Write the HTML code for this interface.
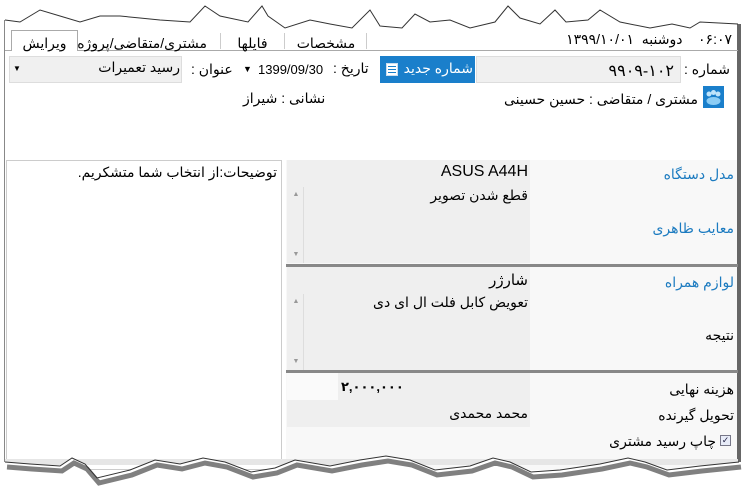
<!DOCTYPE html>
<html><head><meta charset="utf-8"><style>
*{margin:0;padding:0;box-sizing:border-box}
body{width:750px;height:501px;background:#fff;position:relative;overflow:hidden;font-family:"Liberation Sans","DejaVu Sans",sans-serif;font-size:14px;color:#000}
.a{position:absolute;white-space:nowrap}
.r{direction:rtl}
.lbl{color:#1c7bc0}
</style></head><body>
<!-- frame -->
<div class="a" style="left:4px;top:20px;width:737px;height:450px;background:#fff;border-left:1px solid #888;border-right:4px solid #666"></div>
<!-- torn top -->
<svg class="a" style="left:0;top:0" width="750" height="40">
<polygon fill="#fff" points="0,0 750,0 750,24 738,24 700,22 690,28 672,24 650,28 620,22 600,10 588,20 566,22 555,10 540,24 520,18 508,6 495,22 470,28 450,20 430,22 415,14 402,28 380,26 370,10 352,28 330,24 310,20 285,28 268,16 262,6 248,22 220,16 205,6 190,22 160,20 140,18 120,16 100,16 80,22 60,16 40,10 20,22 5,20 0,20"/>
<polyline fill="none" stroke="#333" stroke-width="1" points="5,20 20,22 40,10 60,16 80,22 100,16 120,16 140,18 160,20 190,22 205,6 220,16 248,22 262,6 268,16 285,28 310,20 330,24 352,28 370,10 380,26 402,28 415,14 430,22 450,20 470,28 495,22 508,6 520,18 540,24 555,10 566,22 588,20 600,10 620,22 650,28 672,24 690,28 700,22 738,24"/>
</svg>
<!-- tabs -->
<div class="a" style="left:5px;top:50px;width:733px;height:1px;background:#aaa"></div>
<div class="a" style="left:11px;top:30px;width:67px;height:21px;background:#fff;border:1px solid #aaa;border-bottom:none"></div>
<div class="a r" style="left:11px;top:35px;width:67px;text-align:center">ویرایش</div>
<div class="a r" style="left:90px;top:35px;width:117px;text-align:center">مشتری/متقاضی/پروژه</div>
<div class="a" style="left:220px;top:33px;width:1px;height:16px;background:#ccc"></div>
<div class="a r" style="left:230px;top:35px;width:45px;text-align:center">فایلها</div>
<div class="a" style="left:284px;top:33px;width:1px;height:16px;background:#ccc"></div>
<div class="a r" style="left:296px;top:35px;width:60px;text-align:center">مشخصات</div>
<div class="a" style="left:366px;top:33px;width:1px;height:16px;background:#ccc"></div>
<div class="a r" style="right:18px;top:31px">۰۶:۰۷&nbsp;&nbsp;&nbsp;&nbsp;دوشنبه&nbsp;&nbsp;۱۳۹۹/۱۰/۰۱</div>
<!-- row1 -->
<div class="a r" style="right:20px;top:61px">شماره :</div>
<div class="a" style="left:476px;top:56px;width:205px;height:27px;background:#f0f0f0;border:1px solid #ddd;padding:4px 6px 0 0;font-size:16px;text-align:right;direction:ltr">۹۹۰۹-۱۰۲</div>
<div class="a" style="left:380px;top:56px;width:95px;height:27px;background:#1a7fcb"></div>
<div class="a r" style="left:405px;top:60px;width:68px;color:#fff;text-align:center">شماره جدید</div>
<div class="a" style="left:386px;top:63px;width:12px;height:13px;background:#fff;border:1px solid #cde"><div style="margin:2px 1px;height:1px;background:#1a7fcb;box-shadow:0 3px #1a7fcb,0 6px #1a7fcb"></div></div>
<div class="a r" style="left:333px;top:60px">تاریخ :</div>
<div class="a" style="left:258px;top:62px;font-size:13px">1399/09/30</div>
<div class="a" style="left:243px;top:64px;font-size:9px">▼</div>
<div class="a r" style="left:191px;top:61px">عنوان :</div>
<div class="a" style="left:9px;top:56px;width:173px;height:27px;background:#f0f0f0;border:1px solid #ddd"></div>
<div class="a r" style="right:570px;top:59px">رسید تعمیرات</div>
<div class="a" style="left:13px;top:64px;font-size:8px">▼</div>
<!-- row2 -->
<div class="a" style="left:703px;top:86px;width:21px;height:22px;background:#1a7fcb">
<svg width="21" height="22"><circle cx="6" cy="8" r="2.5" fill="#bfe4fb"/><circle cx="10.5" cy="6.5" r="2.5" fill="#bfe4fb"/><circle cx="15" cy="8" r="2.5" fill="#bfe4fb"/><ellipse cx="10.5" cy="15" rx="7" ry="4" fill="#8ccdf5"/></svg></div>
<div class="a r" style="right:52px;top:91px">مشتری / متقاضی : حسین حسینی</div>
<div class="a r" style="left:243px;top:90px">نشانی : شیراز</div>
<!-- bottom panels -->
<div class="a" style="left:6px;top:160px;width:276px;height:310px;background:#fff;border:1px solid #ccc"></div>
<div class="a r" style="right:473px;top:164px">توضیحات:از انتخاب شما متشکریم.</div>
<div class="a" style="left:286px;top:160px;width:451px;height:310px;background:#f8f8f8"></div>
<div class="a" style="left:5px;top:459px;width:733px;height:6px;background:#e6e6e6"></div>
<div class="a" style="left:287px;top:160px;width:243px;height:103px;background:#efefef"></div>
<div class="a" style="left:289px;top:187px;width:15px;height:76px;border-right:1px solid #ddd;color:#999;font-size:7px;text-align:center"><div style="margin-top:4px">▲</div><div style="margin-top:53px">▼</div></div>
<div class="a" style="left:286px;top:264px;width:452px;height:3px;background:#888"></div>
<div class="a" style="left:287px;top:267px;width:243px;height:103px;background:#efefef"></div>
<div class="a" style="left:289px;top:294px;width:15px;height:76px;border-right:1px solid #ddd;color:#999;font-size:7px;text-align:center"><div style="margin-top:4px">▲</div><div style="margin-top:53px">▼</div></div>
<div class="a" style="left:286px;top:370px;width:452px;height:3px;background:#888"></div>
<div class="a" style="left:287px;top:373px;width:243px;height:54px;background:#efefef"></div>
<div class="a" style="left:287px;top:373px;width:51px;height:27px;background:#fafafa"></div>
<div class="a r lbl" style="right:16px;top:166px">مدل دستگاه</div>
<div class="a r lbl" style="right:16px;top:220px">معایب ظاهری</div>
<div class="a r lbl" style="right:16px;top:274px">لوازم همراه</div>
<div class="a r" style="right:16px;top:327px">نتیجه</div>
<div class="a r" style="right:16px;top:381px">هزینه نهایی</div>
<div class="a r" style="right:16px;top:407px">تحویل گیرنده</div>
<div class="a" style="left:720px;top:435px;width:11px;height:11px;border:1px solid #778;background:#e8ecf8;font-size:9px;line-height:9px;color:#224;text-align:center">✓</div>
<div class="a r" style="right:34px;top:433px">چاپ رسید مشتری</div>
<div class="a" style="right:222px;top:163px;font-size:16px">ASUS A44H</div>
<div class="a r" style="right:222px;top:187px">قطع شدن تصویر</div>
<div class="a r" style="right:222px;top:271px;font-size:15px">شارژر</div>
<div class="a r" style="right:222px;top:294px">تعویض کابل فلت ال ای دی</div>
<div class="a" style="left:341px;top:379px;font-weight:bold;font-size:13px">۲,۰۰۰,۰۰۰</div>
<div class="a r" style="right:222px;top:405px">محمد محمدی</div>
<!-- torn bottom -->
<svg class="a" style="left:0;top:440px" width="750" height="61">
<polygon fill="#fff" points="0,61 750,61 750,0 744,22 739,22 700,26 667,30 645,22 628,18 600,24 560,30 531,32 510,22 493,18 470,26 435,30 410,20 386,16 360,20 330,26 295,20 275,28 251,32 225,22 203,18 180,24 155,20 130,30 97,38 85,24 72,18 60,26 30,24 5,22 0,22"/>
<polyline fill="none" stroke="#555" stroke-width="5" opacity="0.75" transform="translate(2,5)" points="5,22 30,24 60,26 72,18 85,24 97,38 130,30 155,20 180,24 203,18 225,22 251,32 275,28 295,20 330,26 360,20 386,16 410,20 435,30 470,26 493,18 510,22 531,32 560,30 600,24 628,18 645,22 667,30 700,26 739,22"/>
<polyline fill="none" stroke="#333" stroke-width="1" points="5,22 30,24 60,26 72,18 85,24 97,38 130,30 155,20 180,24 203,18 225,22 251,32 275,28 295,20 330,26 360,20 386,16 410,20 435,30 470,26 493,18 510,22 531,32 560,30 600,24 628,18 645,22 667,30 700,26 739,22"/>
</svg>
</body></html>
